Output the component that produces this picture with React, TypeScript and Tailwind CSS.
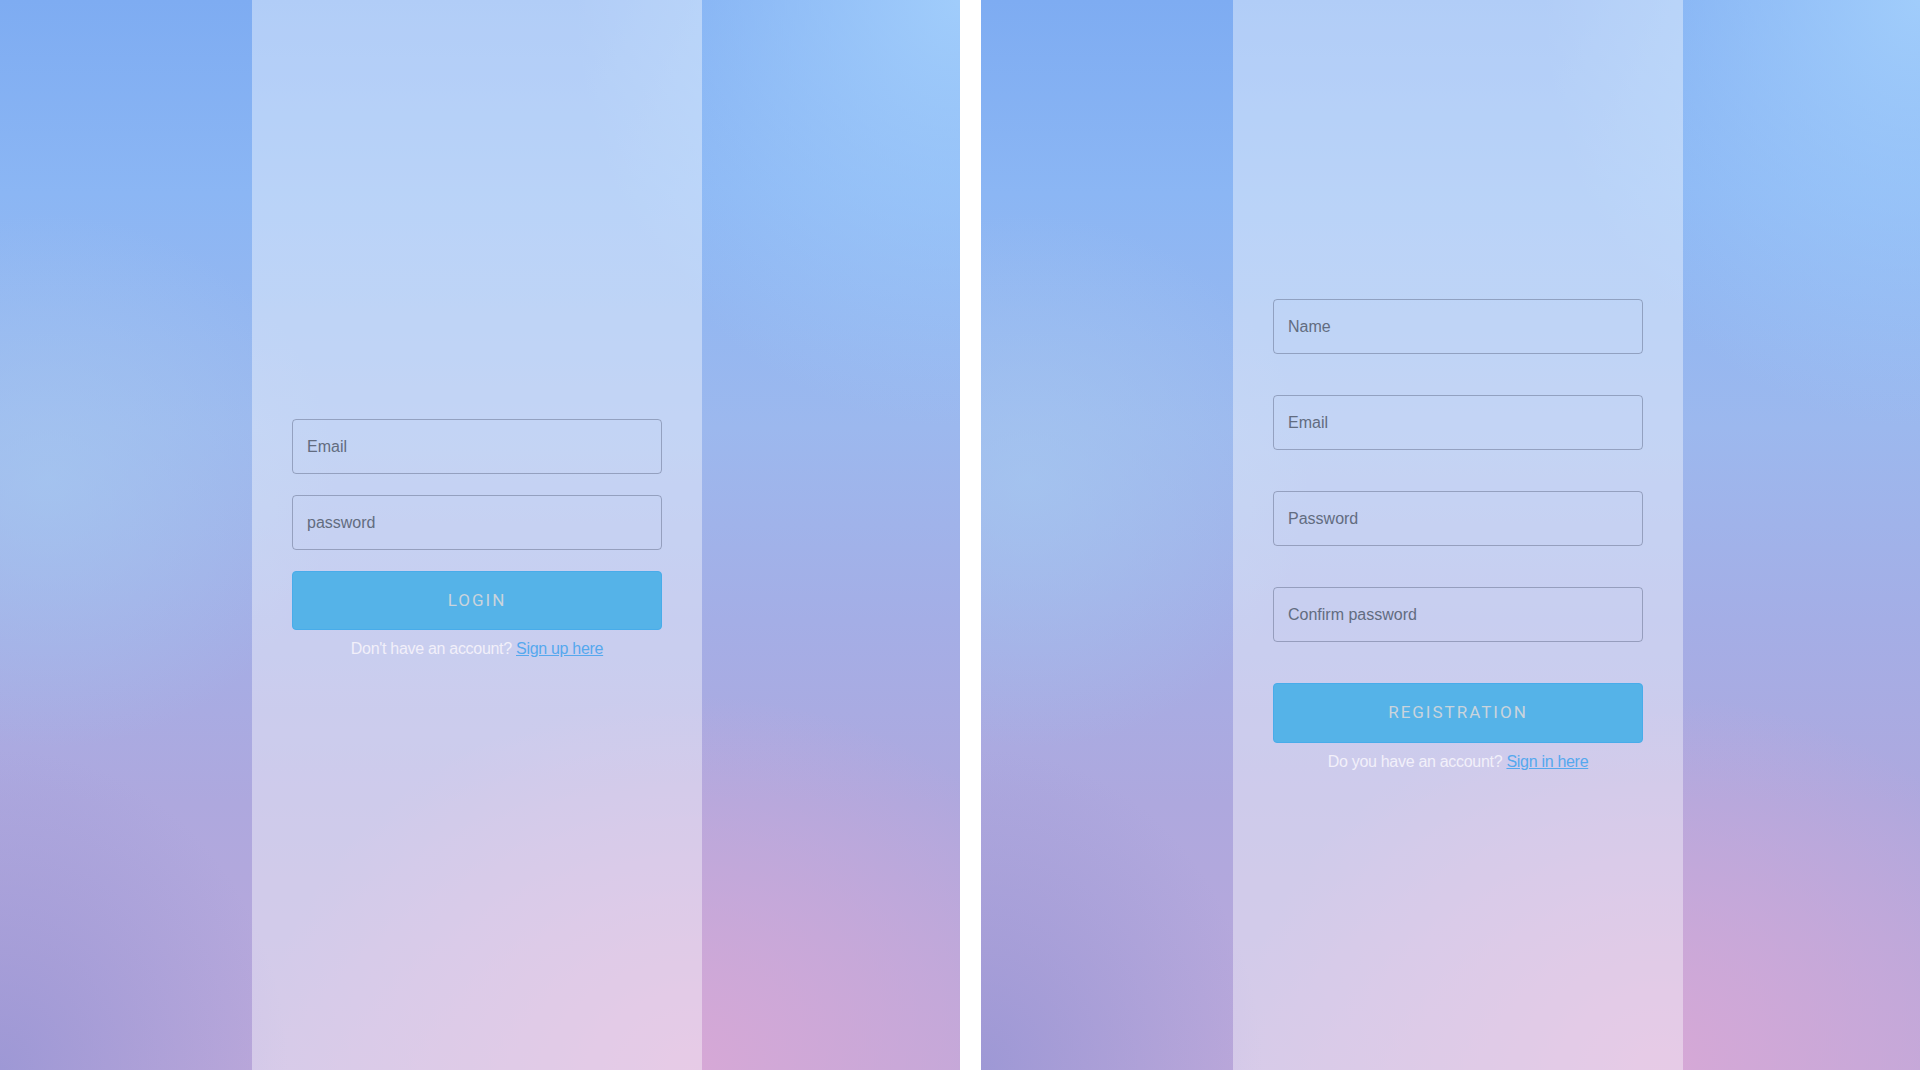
import React from "react";

const panelBg =
  "bg-[radial-gradient(45%_35%_at_72%_100%,rgba(216,168,214,0.95),transparent),radial-gradient(40%_40%_at_100%_0%,rgba(164,208,252,0.9),transparent),radial-gradient(30%_30%_at_0%_100%,rgba(150,148,212,0.8),transparent),radial-gradient(30%_25%_at_5%_45%,rgba(166,200,240,0.7),transparent),linear-gradient(to_bottom,#7eacf2_0%,#8bb6f4_18%,#9cb8ee_40%,#a4aee6_58%,#aea8de_75%,#bca8da_100%)]";

const Field = ({ placeholder, type = "text" }: { placeholder: string; type?: string }) => (
  <input
    type={type}
    placeholder={placeholder}
    className="h-[55px] w-full rounded border border-[rgba(80,90,120,0.42)] bg-transparent px-[14px] text-[16px] text-[#4b5563] outline-none placeholder:text-[#626c80]"
  />
);

const SubmitButton = ({ label, tall }: { label: string; tall?: boolean }) => (
  <button
    type="submit"
    className={
      "w-full rounded border border-[#48acea] bg-[#55b3e8] font-['Roboto',sans-serif] text-[17px] font-normal tracking-[2px] text-[#cad4dc] " +
      (tall ? "h-[60px]" : "h-[59px]")
    }
  >
    {label}
  </button>
);

const Footer = ({ text, link }: { text: string; link: string }) => (
  <p className="mt-[7px] text-center text-[16px] leading-6 tracking-[-0.3px] text-[#f2f0fa]">
    {text}{" "}
    <a href="#" className="text-[#55a8ee] underline">
      {link}
    </a>
  </p>
);

const Login = () => (
  <form
    className="flex flex-col px-10 pt-[419px]"
    onSubmit={(e) => e.preventDefault()}
  >
    <Field placeholder="Email" type="email" />
    <div className="mt-[21px]">
      <Field placeholder="password" type="password" />
    </div>
    <div className="mt-[21px]">
      <SubmitButton label="LOGIN" />
    </div>
    <Footer text="Don't have an account?" link="Sign up here" />
  </form>
);

const Register = () => (
  <form
    className="flex flex-col gap-[41px] px-10 pt-[299px]"
    onSubmit={(e) => e.preventDefault()}
  >
    <Field placeholder="Name" />
    <Field placeholder="Email" type="email" />
    <Field placeholder="Password" type="password" />
    <Field placeholder="Confirm password" type="password" />
    <div>
      <SubmitButton label="REGISTRATION" tall />
      <Footer text="Do you have an account?" link="Sign in here" />
    </div>
  </form>
);

const Panel = ({ width, children }: { width: string; children: React.ReactNode }) => (
  <div className={"flex h-full pl-[252px] " + width + " " + panelBg}>
    <div className="h-full w-[450px] bg-white/40">{children}</div>
  </div>
);

export default function App() {
  return (
    <div className="flex h-[1070px] w-[1920px] gap-[21px] overflow-hidden bg-white font-['Liberation_Sans',Arial,sans-serif]">
      <Panel width="w-[960px]">
        <Login />
      </Panel>
      <Panel width="w-[939px]">
        <Register />
      </Panel>
    </div>
  );
}
